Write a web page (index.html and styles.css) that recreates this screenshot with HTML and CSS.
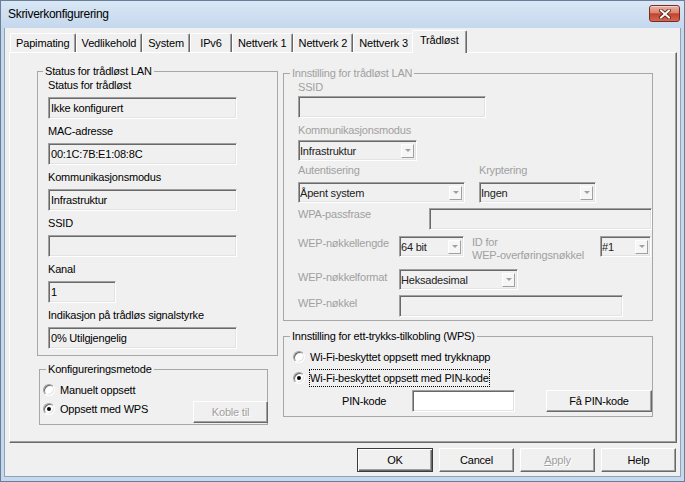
FILE: index.html
```html
<!DOCTYPE html>
<html>
<head>
<meta charset="utf-8">
<title>Skriverkonfigurering</title>
<link rel="stylesheet" href="styles.css">
</head>
<body>
<div class="window">
  <div class="titlebar">
    <span class="title">Skriverkonfigurering</span>
    <span class="close"><svg width="12" height="10" viewBox="0 0 12 10"><path d="M2 1.5 L10 8.5 M10 1.5 L2 8.5" stroke="#4a1810" stroke-width="3.6" stroke-linecap="square"/><path d="M2 1.5 L10 8.5 M10 1.5 L2 8.5" stroke="#ffffff" stroke-width="2" stroke-linecap="square"/></svg></span>
  </div>
  <div class="frame">
    <div class="client">
      <div class="tabs">
        <div class="tab">Papimating</div>
        <div class="tab">Vedlikehold</div>
        <div class="tab">System</div>
        <div class="tab">IPv6</div>
        <div class="tab">Nettverk 1</div>
        <div class="tab">Nettverk 2</div>
        <div class="tab">Nettverk 3</div>
        <div class="tab active">Trådløst</div>
      </div>
      <div class="panel">
        <div class="col">
          <div class="group status">
            <span class="group-title gt-first">Status for trådløst LAN</span>
            <div class="lbl">Status for trådløst</div>
            <div class="field w189">Ikke konfigurert</div>
            <div class="lbl">MAC-adresse</div>
            <div class="field w189">00:1C:7B:E1:08:8C</div>
            <div class="lbl">Kommunikasjonsmodus</div>
            <div class="field w189">Infrastruktur</div>
            <div class="lbl">SSID</div>
            <div class="field w189"></div>
            <div class="lbl">Kanal</div>
            <div class="field w68">1</div>
            <div class="lbl">Indikasjon på trådløs signalstyrke</div>
            <div class="field w189">0% Utilgjengelig</div>
          </div>
          <div class="group method">
            <span class="group-title">Konfigureringsmetode</span>
            <div class="radio-row"><span class="radio"></span><span>Manuelt oppsett</span></div>
            <div class="method-row">
              <div class="radio-row"><span class="radio checked"></span><span>Oppsett med WPS</span></div>
              <div class="btn disabled koble">Koble til</div>
            </div>
          </div>
        </div>
        <div class="col right">
          <div class="group lan">
            <span class="group-title dis">Innstilling for trådløst LAN</span>
            <div class="lbl dis">SSID</div>
            <div class="field w188 mt2"></div>
            <div class="lbl dis mt5">Kommunikasjonsmodus</div>
            <div class="combo w119 mt3"><span class="val">Infrastruktur</span><span class="arrow"></span></div>
            <div class="pair">
              <div class="pcol auth">
                <div class="lbl dis">Autentisering</div>
                <div class="combo w167 mt5"><span class="val">Åpent system</span><span class="arrow"></span></div>
              </div>
              <div class="pcol">
                <div class="lbl dis">Kryptering</div>
                <div class="combo w117 mt5"><span class="val">Ingen</span><span class="arrow"></span></div>
              </div>
            </div>
            <div class="frow wpa">
              <div class="flbl dis wide">WPA-passfrase</div>
              <div class="field w223 mt1"></div>
            </div>
            <div class="frow wep-len">
              <div class="flbl dis">WEP-nøkkellengde</div>
              <div class="combo w65"><span class="val">64 bit</span><span class="arrow"></span></div>
              <div class="idlbl dis">ID for<br>WEP-overføringsnøkkel</div>
              <div class="combo w51"><span class="val">#1</span><span class="arrow"></span></div>
            </div>
            <div class="frow wep-fmt">
              <div class="flbl dis mt1">WEP-nøkkelformat</div>
              <div class="combo w119"><span class="val">Heksadesimal</span><span class="arrow"></span></div>
            </div>
            <div class="frow wep-key">
              <div class="flbl dis mt1">WEP-nøkkel</div>
              <div class="field w224"></div>
            </div>
          </div>
          <div class="group wps">
            <span class="group-title">Innstilling for ett-trykks-tilkobling (WPS)</span>
            <div class="radio-row r18"><span class="radio"></span><span>Wi-Fi-beskyttet oppsett med trykknapp</span></div>
            <div class="radio-row r18 mt3"><span class="radio checked"></span><span class="focus">Wi-Fi-beskyttet oppsett med PIN-kode</span></div>
            <div class="pin-row">
              <div class="pinlbl">PIN-kode</div>
              <div class="field white w103"></div>
              <div class="btn getpin">Få PIN-kode</div>
            </div>
          </div>
        </div>
      </div>
      <div class="actions">
        <div class="btn act default">OK</div>
        <div class="btn act">Cancel</div>
        <div class="btn act disabled"><span><u>A</u>pply</span></div>
        <div class="btn act">Help</div>
      </div>
    </div>
  </div>
</div>
</body>
</html>
```

FILE: styles.css
```css
* { box-sizing: border-box; }
html, body { margin: 0; padding: 0; }
body {
  width: 685px;
  height: 482px;
  overflow: hidden;
  font-family: "Liberation Sans", Arial, sans-serif;
  font-size: 11px;
  letter-spacing: -0.2px;
  color: #000;
  background: #fff;
}

.window {
  width: 685px;
  height: 482px;
  border: 1px solid #6a7f97;
  display: flex;
  flex-direction: column;
  background: #c5d8ec;
}

.titlebar {
  height: 27px;
  flex: none;
  display: flex;
  align-items: flex-start;
  padding-left: 7px;
  background: linear-gradient(#d9e7f5, #c4d8ed);
}
.title {
  font-size: 12px;
  line-height: 26px;
  letter-spacing: -0.3px;
  color: #000;
}
.close {
  margin-left: auto;
  margin-top: 4px;
  margin-right: 4px;
  width: 31px;
  height: 17px;
  border: 1px solid #7a2a20;
  border-radius: 3px;
  background: linear-gradient(#eab0a3 0%, #db8573 45%, #c5422c 52%, #d26750 100%);
  box-shadow: inset 0 1px 0 rgba(255,255,255,0.5);
  display: flex;
  align-items: center;
  justify-content: center;
}

.frame {
  flex: 1;
  display: flex;
  padding: 0 3px 4px 3px;
}
.client {
  flex: 1;
  background: #f0f0f0;
  border: 1px solid #8ea3bb;
  border-top: none;
  padding: 2px 3px 0 4px;
  display: flex;
  flex-direction: column;
}

/* tabs */
.tabs {
  height: 22px;
  display: flex;
  align-items: flex-end;
  padding-left: 1px;
}
.tab {
  height: 19px;
  padding: 0 5px;
  min-width: 42px;
  text-align: center;
  white-space: nowrap;
  letter-spacing: -0.15px;
  line-height: 18px;
  border: 1px solid;
  border-bottom: none;
  border-color: #fff #696969 transparent #fff;
  border-radius: 2px 2px 0 0;
  box-shadow: inset -1px 0 0 #a0a0a0;
  background: #f0f0f0;
}
.tab.active {
  height: 23px;
  margin: 0 -2px -1px -2px;
  padding: 1px 7px 0 7px;
  line-height: 16px;
  position: relative;
  z-index: 1;
}

/* panel */
.panel {
  width: 668px;
  height: 391px;
  flex: none;
  border: 1px solid;
  border-color: #fff #696969 #696969 #fff;
  box-shadow: inset -1px -1px 0 #a0a0a0;
  padding: 18px 0 0 27px;
  display: grid;
  grid-template-columns: 241px 370px;
  column-gap: 5px;
  align-items: start;
}
.col { display: flex; flex-direction: column; align-items: flex-start; }
.col.right { margin-top: 2px; }

.group {
  position: relative;
  border: 1px solid #a7a7a7;
}
.group-title {
  position: absolute;
  top: -8px;
  left: 6px;
  padding: 0 2px;
  background: #f0f0f0;
  line-height: 14px;
  white-space: nowrap;
}
.group-title.gt-first { left: 5px; }

.lbl { line-height: 14px; height: 14px; white-space: nowrap; }
.dis { color: #a0a0a0; }

.field {
  height: 22px;
  border: 1px solid;
  border-color: #a0a0a0 #fff #fff #a0a0a0;
  box-shadow: inset 1px 1px 0 #696969, inset -1px -1px 0 #e3e3e3;
  background: #f0f0f0;
  padding-left: 2px;
  line-height: 20px;
  white-space: nowrap;
  flex: none;
}
.field.white { background: #fff; }
.w189 { width: 189px; }
.w188 { width: 188px; }
.w68 { width: 68px; }
.w223 { width: 223px; }
.w224 { width: 224px; }
.w103 { width: 103px; }
.w119 { width: 119px; }
.w167 { width: 167px; }
.w117 { width: 117px; }
.w65 { width: 65px; }
.w51 { width: 51px; }

.mt1 { margin-top: 1px; }
.mt2 { margin-top: 2px; }
.mt3 { margin-top: 3px; }
.mt5 { margin-top: 5px; }

/* status group */
.status {
  width: 241px;
  padding: 6px 0 6px 10px;
  display: flex;
  flex-direction: column;
  align-items: flex-start;
  gap: 5px;
}

/* method group */
.method {
  width: 229px;
  margin: 13px 0 0 2px;
  padding: 10px 0 1px 3px;
}
.radio-row {
  display: flex;
  align-items: center;
  height: 19px;
  white-space: nowrap;
}
.radio-row.r18 { height: 18px; }
.radio {
  width: 12px;
  height: 12px;
  flex: none;
  border-radius: 50%;
  border: 1px solid;
  border-color: #a0a0a0 #fff #fff #a0a0a0;
  box-shadow: inset 1px 1px 0 #696969, inset -1px -1px 0 #e3e3e3;
  background: #fff;
  margin-right: 5px;
  position: relative;
}
.radio.checked::after {
  content: "";
  position: absolute;
  left: 3px;
  top: 3px;
  width: 4px;
  height: 4px;
  border-radius: 50%;
  background: #000;
}
.method-row {
  display: flex;
  align-items: flex-start;
}
.koble {
  margin-left: auto;
  margin-top: 2px;
  margin-right: -1px;
  width: 75px;
}

/* buttons */
.btn {
  height: 22px;
  display: flex;
  align-items: center;
  justify-content: center;
  border: 1px solid;
  border-color: #fff #696969 #696969 #fff;
  box-shadow: inset -1px -1px 0 #a0a0a0;
  background: #f0f0f0;
  white-space: nowrap;
  flex: none;
}
.btn.disabled { color: #a0a0a0; text-shadow: 1px 1px 0 #fff; }

/* right LAN group */
.lan {
  width: 370px;
  padding: 6px 0 3px 14px;
}
.combo {
  height: 21px;
  display: flex;
  align-items: center;
  border: 1px solid;
  border-color: #a0a0a0 #fff #fff #a0a0a0;
  box-shadow: inset 1px 1px 0 #696969, inset -1px -1px 0 #e3e3e3;
  background: #f0f0f0;
  padding-left: 1px;
  color: #222;
  flex: none;
}
.combo .val { flex: 1; line-height: 14px; white-space: nowrap; overflow: hidden; }
.combo .arrow {
  width: 13px;
  height: 14px;
  margin-right: 2px;
  border: 1px solid;
  border-color: #fff #a0a0a0 #a0a0a0 #fff;
  background: #f6f6f6;
  display: flex;
  align-items: center;
  justify-content: center;
  flex: none;
}
.combo .arrow::after {
  content: "";
  border-left: 3px solid transparent;
  border-right: 3px solid transparent;
  border-top: 3px solid #a0a0a0;
}
.pair { display: flex; margin-top: 2px; }
.pcol { display: flex; flex-direction: column; }
.pcol.auth { margin-right: 14px; }

.frow { display: flex; align-items: flex-start; }
.flbl { width: 101px; line-height: 14px; white-space: nowrap; flex: none; }
.flbl.wide { width: 131px; }
.wpa { margin-top: 4px; }
.wep-len { margin-top: 6px; }
.wep-fmt { margin-top: 7px; }
.wep-key { margin-top: 5px; }
.idlbl {
  width: 128px;
  margin-left: 8px;
  line-height: 13px;
  white-space: nowrap;
}

/* WPS group */
.wps {
  width: 370px;
  margin-top: 15px;
  padding: 11px 0 4px 9px;
}
.focus {
  border: 1px dotted #000;
  padding: 1px 0;
  line-height: 14px;
  margin-left: -1px;
}
.pin-row {
  display: flex;
  align-items: center;
  height: 22px;
  margin-top: 3px;
}
.pinlbl { width: 70px; margin-left: 49px; line-height: 14px; }
.getpin { width: 106px; margin-left: 31px; }

/* bottom buttons */
.actions {
  width: 668px;
  margin-top: 5px;
  padding-right: 1px;
  display: flex;
  justify-content: flex-end;
  gap: 6px;
}
.btn.act { width: 75px; height: 24px; }
.btn.act.default {
  width: 76px;
  border-color: #3c3c3c;
  box-shadow: inset 1px 1px 0 #fff, inset -1px -1px 0 #696969, inset -2px -2px 0 #a0a0a0;
}
```
